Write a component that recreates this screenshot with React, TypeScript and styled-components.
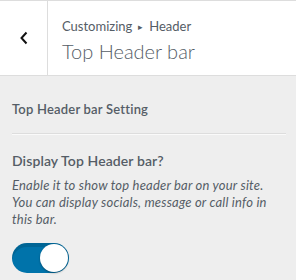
import React from "react";
import styled, { createGlobalStyle } from "styled-components";

const Global = createGlobalStyle`
  html, body { margin: 0; padding: 0; background: #eeeeee; }
  body { font-family: "Segoe UI", Lato, "Open Sans", sans-serif; }
  * { box-sizing: border-box; }
`;

const Panel = styled.div`
  width: 296px;
  height: 280px;
  background: #eeeeee;
  overflow: hidden;
`;

const Header = styled.div`
  display: flex;
  height: 76px;
  background: #fff;
  border-top: 1px solid #dddddd;
  border-bottom: 1px solid #dddddd;
`;

const BackButton = styled.button`
  width: 48px;
  flex: none;
  border: none;
  border-right: 1px solid #dddddd;
  background: #fff;
  padding: 0;
  display: flex;
  align-items: center;
  justify-content: center;
  color: #111;
  cursor: pointer;
`;

const TitleBlock = styled.div`
  padding: 15px 0 0 14px;
  display: flex;
  flex-direction: column;
`;

const Crumb = styled.span`
  font-size: 13px;
  line-height: 20px;
  color: #555d66;
`;

const Arrow = styled.span`
  font-size: 9px;
  margin: 0 6px;
  position: relative;
  top: -1px;
`;

const Title = styled.h3`
  margin: 0;
  font-size: 20px;
  font-weight: 300;
  line-height: 26px;
  color: #555d66;
`;

const Body = styled.div`
  padding: 24px 10px 0 12px;
`;

const SectionTitle = styled.div`
  font-size: 13px;
  font-weight: 600;
  line-height: 18px;
  letter-spacing: 0.2px;
  color: #555d66;
`;

const Divider = styled.hr`
  margin: 15px 0 0;
  border: none;
  border-top: 1px solid #dddddd;
  border-bottom: 1px solid #fafafa;
`;

const ControlTitle = styled.div`
  margin-top: 16px;
  font-size: 14px;
  font-weight: 600;
  line-height: 20px;
  letter-spacing: 0.1px;
  color: #555d66;
`;

const Description = styled.p`
  margin: 6px 0 0;
  font-size: 13px;
  font-style: italic;
  line-height: 17px;
  letter-spacing: 0.2px;
  color: #555d66;
`;

const Toggle = styled.div<{ $on: boolean }>`
  position: relative;
  margin-top: 15px;
  width: 57px;
  height: 30px;
  border-radius: 15px;
  background: ${(p) => (p.$on ? "#0073aa" : "#ccc")};
  box-shadow: inset 0 4px 0 rgba(0, 0, 0, 0.12);
`;

const Knob = styled.div<{ $on: boolean }>`
  position: absolute;
  top: 1px;
  left: ${(p) => (p.$on ? "28px" : "1px")};
  width: 28px;
  height: 28px;
  border-radius: 50%;
  background: #fff;
  box-shadow: 0 1px 2px rgba(0, 0, 0, 0.35);
`;

export default function App() {
  return (
    <>
      <Global />
      <Panel>
        <Header>
          <BackButton aria-label="Back">
            <svg width="10" height="14" viewBox="0 0 10 14">
              <path d="M7.5 1.5 L2.5 7 L7.5 12.5" fill="none" stroke="#111" strokeWidth="2" />
            </svg>
          </BackButton>
          <TitleBlock>
            <Crumb>
              Customizing<Arrow>▸</Arrow>Header
            </Crumb>
            <Title>Top Header bar</Title>
          </TitleBlock>
        </Header>
        <Body>
          <SectionTitle>Top Header bar Setting</SectionTitle>
          <Divider />
          <ControlTitle>Display Top Header bar?</ControlTitle>
          <Description>
            Enable it to show top header bar on your site. You can display socials, message or call info in this bar.
          </Description>
          <Toggle $on>
            <Knob $on />
          </Toggle>
        </Body>
      </Panel>
    </>
  );
}
